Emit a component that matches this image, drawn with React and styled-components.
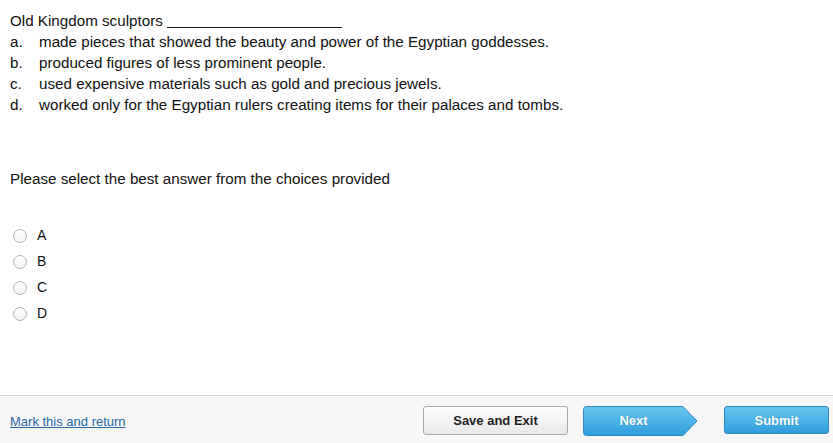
import React from "react";
import styled, { createGlobalStyle } from "styled-components";

const GlobalStyle = createGlobalStyle`
  html, body {
    margin: 0;
    padding: 0;
    background: #ffffff;
  }
  body {
    font-family: "Liberation Sans", Arial, Helvetica, sans-serif;
    color: #111;
  }
`;

const Page = styled.div`
  display: flex;
  flex-direction: column;
  height: 443px;
  width: 833px;
`;

const Main = styled.div`
  flex: 1;
  padding: 10px 10px 0 10px;
  font-size: 15.2px;
  line-height: 21px;
`;

const Stem = styled.div``;

const Blank = styled.span`
  display: inline-block;
  width: 175px;
  height: 15px;
  margin-left: 4px;
  border-bottom: 1px solid #222;
  vertical-align: -2px;
`;

const Option = styled.div`
  display: flex;
`;

const OptionLetter = styled.span`
  width: 29px;
  flex-shrink: 0;
`;

const Prompt = styled.p`
  margin: 53px 0 0 0;
`;

const Choices = styled.div`
  margin-top: 36px;
  display: flex;
  flex-direction: column;
  gap: 5px;
`;

const Choice = styled.label`
  display: flex;
  align-items: center;
  height: 21px;
  font-size: 14px;
`;

const Radio = styled.span`
  box-sizing: border-box;
  width: 14px;
  height: 14px;
  border-radius: 50%;
  border: 1px solid #b5b5b5;
  background: linear-gradient(#ffffff, #f1f1f1);
  margin-left: 3px;
  margin-right: 10px;
`;

const Footer = styled.div`
  height: 47px;
  border-top: 1px solid #d2d2d2;
  background: #f7f7f7;
  display: flex;
  align-items: center;
  padding: 0 4px 0 10px;
`;

const MarkLink = styled.a`
  font-size: 13px;
  color: #2767a0;
  text-decoration: underline;
  cursor: pointer;
  margin-top: 4px;
`;

const SaveButton = styled.button`
  margin-left: auto;
  box-sizing: border-box;
  width: 145px;
  height: 29px;
  border: 1px solid #a9a9a9;
  border-radius: 3px;
  background: linear-gradient(#fefefe, #e8e8e8);
  font-family: inherit;
  font-weight: bold;
  font-size: 13px;
  color: #222;
  cursor: pointer;
  margin-top: 1px;
`;

const NextButton = styled.button`
  position: relative;
  margin-left: 15px;
  width: 115px;
  height: 30px;
  padding: 0 14px 0 0;
  border: none;
  background: none;
  font-family: inherit;
  font-weight: bold;
  font-size: 13px;
  color: #fff;
  text-shadow: 0 0 1px rgba(0, 60, 110, 0.4);
  cursor: pointer;
  margin-top: 2px;
`;

const NextShape = styled.svg`
  position: absolute;
  left: 0;
  top: 0;
`;

const NextLabel = styled.span`
  position: relative;
`;

const SubmitButton = styled.button`
  margin-left: 26px;
  box-sizing: border-box;
  width: 105px;
  height: 28px;
  border: 1px solid #2d88bd;
  border-radius: 3px;
  background: linear-gradient(#68c6f2, #2f9fdb);
  font-family: inherit;
  font-weight: bold;
  font-size: 13px;
  color: #fff;
  text-shadow: 0 0 1px rgba(0, 60, 110, 0.4);
  cursor: pointer;
  margin-top: 1px;
`;

const options = [
  ["a.", "made pieces that showed the beauty and power of the Egyptian goddesses."],
  ["b.", "produced figures of less prominent people."],
  ["c.", "used expensive materials such as gold and precious jewels."],
  ["d.", "worked only for the Egyptian rulers creating items for their palaces and tombs."],
];

export default function App() {
  return (
    <Page>
      <GlobalStyle />
      <Main>
        <Stem>
          Old Kingdom sculptors<Blank />
        </Stem>
        {options.map(([letter, text]) => (
          <Option key={letter}>
            <OptionLetter>{letter}</OptionLetter>
            <span>{text}</span>
          </Option>
        ))}
        <Prompt>Please select the best answer from the choices provided</Prompt>
        <Choices>
          {["A", "B", "C", "D"].map((c) => (
            <Choice key={c}>
              <Radio />
              {c}
            </Choice>
          ))}
        </Choices>
      </Main>
      <Footer>
        <MarkLink>Mark this and return</MarkLink>
        <SaveButton>Save and Exit</SaveButton>
        <NextButton>
          <NextShape width="115" height="30" viewBox="0 0 115 30">
            <defs>
              <linearGradient id="nextGrad" x1="0" y1="0" x2="0" y2="1">
                <stop offset="0" stopColor="#68c6f2" />
                <stop offset="1" stopColor="#2f9fdb" />
              </linearGradient>
            </defs>
            <path
              d="M3.5 0.5 H100 L114 15 L100 29.5 H3.5 Q0.5 29.5 0.5 26.5 V3.5 Q0.5 0.5 3.5 0.5 Z"
              fill="url(#nextGrad)"
              stroke="#2d88bd"
              strokeWidth="1"
            />
          </NextShape>
          <NextLabel>Next</NextLabel>
        </NextButton>
        <SubmitButton>Submit</SubmitButton>
      </Footer>
    </Page>
  );
}
